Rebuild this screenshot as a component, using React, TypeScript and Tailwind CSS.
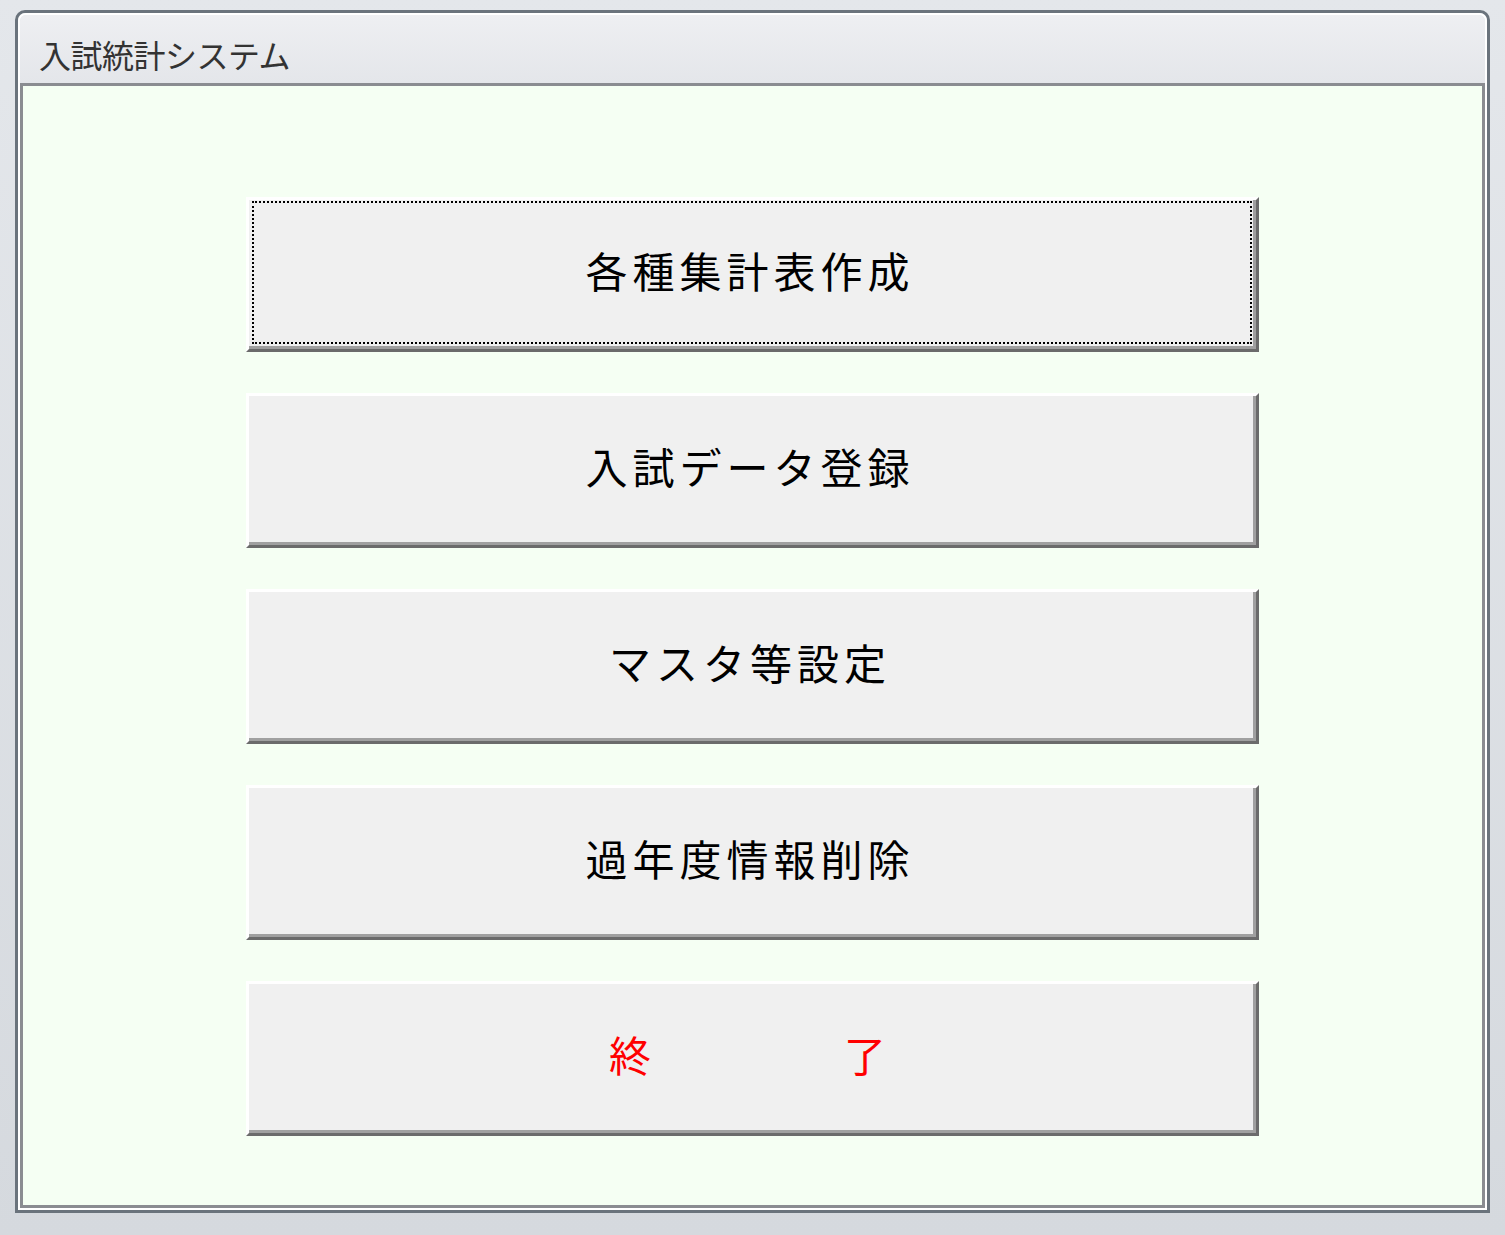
import React from 'react';

const menuItems = [
  { label: '各種集計表作成', focused: true },
  { label: '入試データ登録' },
  { label: 'マスタ等設定' },
  { label: '過年度情報削除' },
  { label: '終　　　　了', danger: true }
];

const MenuButton = ({
  label,
  focused,
  danger
}: {
  label: string;
  focused?: boolean;
  danger?: boolean;
}) => {
  return (
    <button
      type="button"
      className="relative h-[155px] w-full border-[3px] border-t-white border-l-white border-r-[#6b6b6b] border-b-[#6b6b6b] bg-[#f0f0f0] shadow-[inset_-3px_-3px_0_#a0a0a0] pb-[9px] pr-[5px] flex items-center justify-center"
    >
      {focused && (
        <span className="absolute left-[3px] top-[1px] right-[4px] bottom-[5px] border-2 border-dotted border-black pointer-events-none" />
      )}
      <span
        className={`text-[42px] leading-none tracking-[5px] whitespace-pre ${
          danger ? 'text-[#ff0000]' : 'text-black'
        }`}
        style={{ fontFamily: '"Noto Sans CJK JP", "Noto Sans", sans-serif' }}
      >
        {label}
      </span>
    </button>
  );
};

const App = () => {
  return (
    <div className="w-[1505px] h-[1235px] bg-gradient-to-b from-[#e4e7eb] to-[#d5d9de] pt-[10px] pl-[15px]">
      <div className="w-[1475px] h-[1203px] border-[3px] border-[#6a737c] rounded-t-[10px] flex">
        <div className="flex-1 border-2 border-white rounded-t-[8px] flex flex-col">
          <div className="h-[68px] bg-gradient-to-b from-[#eeeff2] to-[#e4e6ea] rounded-t-[6px] flex items-center pl-[19px] pt-[10px]">
            <span
              className="text-[32px] leading-none text-[#333333] tracking-[-0.5px]"
              style={{ fontFamily: '"Noto Sans CJK JP", "Noto Sans", sans-serif' }}
            >
              入試統計システム
            </span>
          </div>
          <div className="flex-1 border-[3px] border-[#8a8c91] bg-[#f5fff3] flex flex-col gap-[41px] pt-[111px] px-[223px]">
            {menuItems.map((item) => (
              <MenuButton
                key={item.label}
                label={item.label}
                focused={item.focused}
                danger={item.danger}
              />
            ))}
          </div>
        </div>
      </div>
    </div>
  );
};

export default App;
